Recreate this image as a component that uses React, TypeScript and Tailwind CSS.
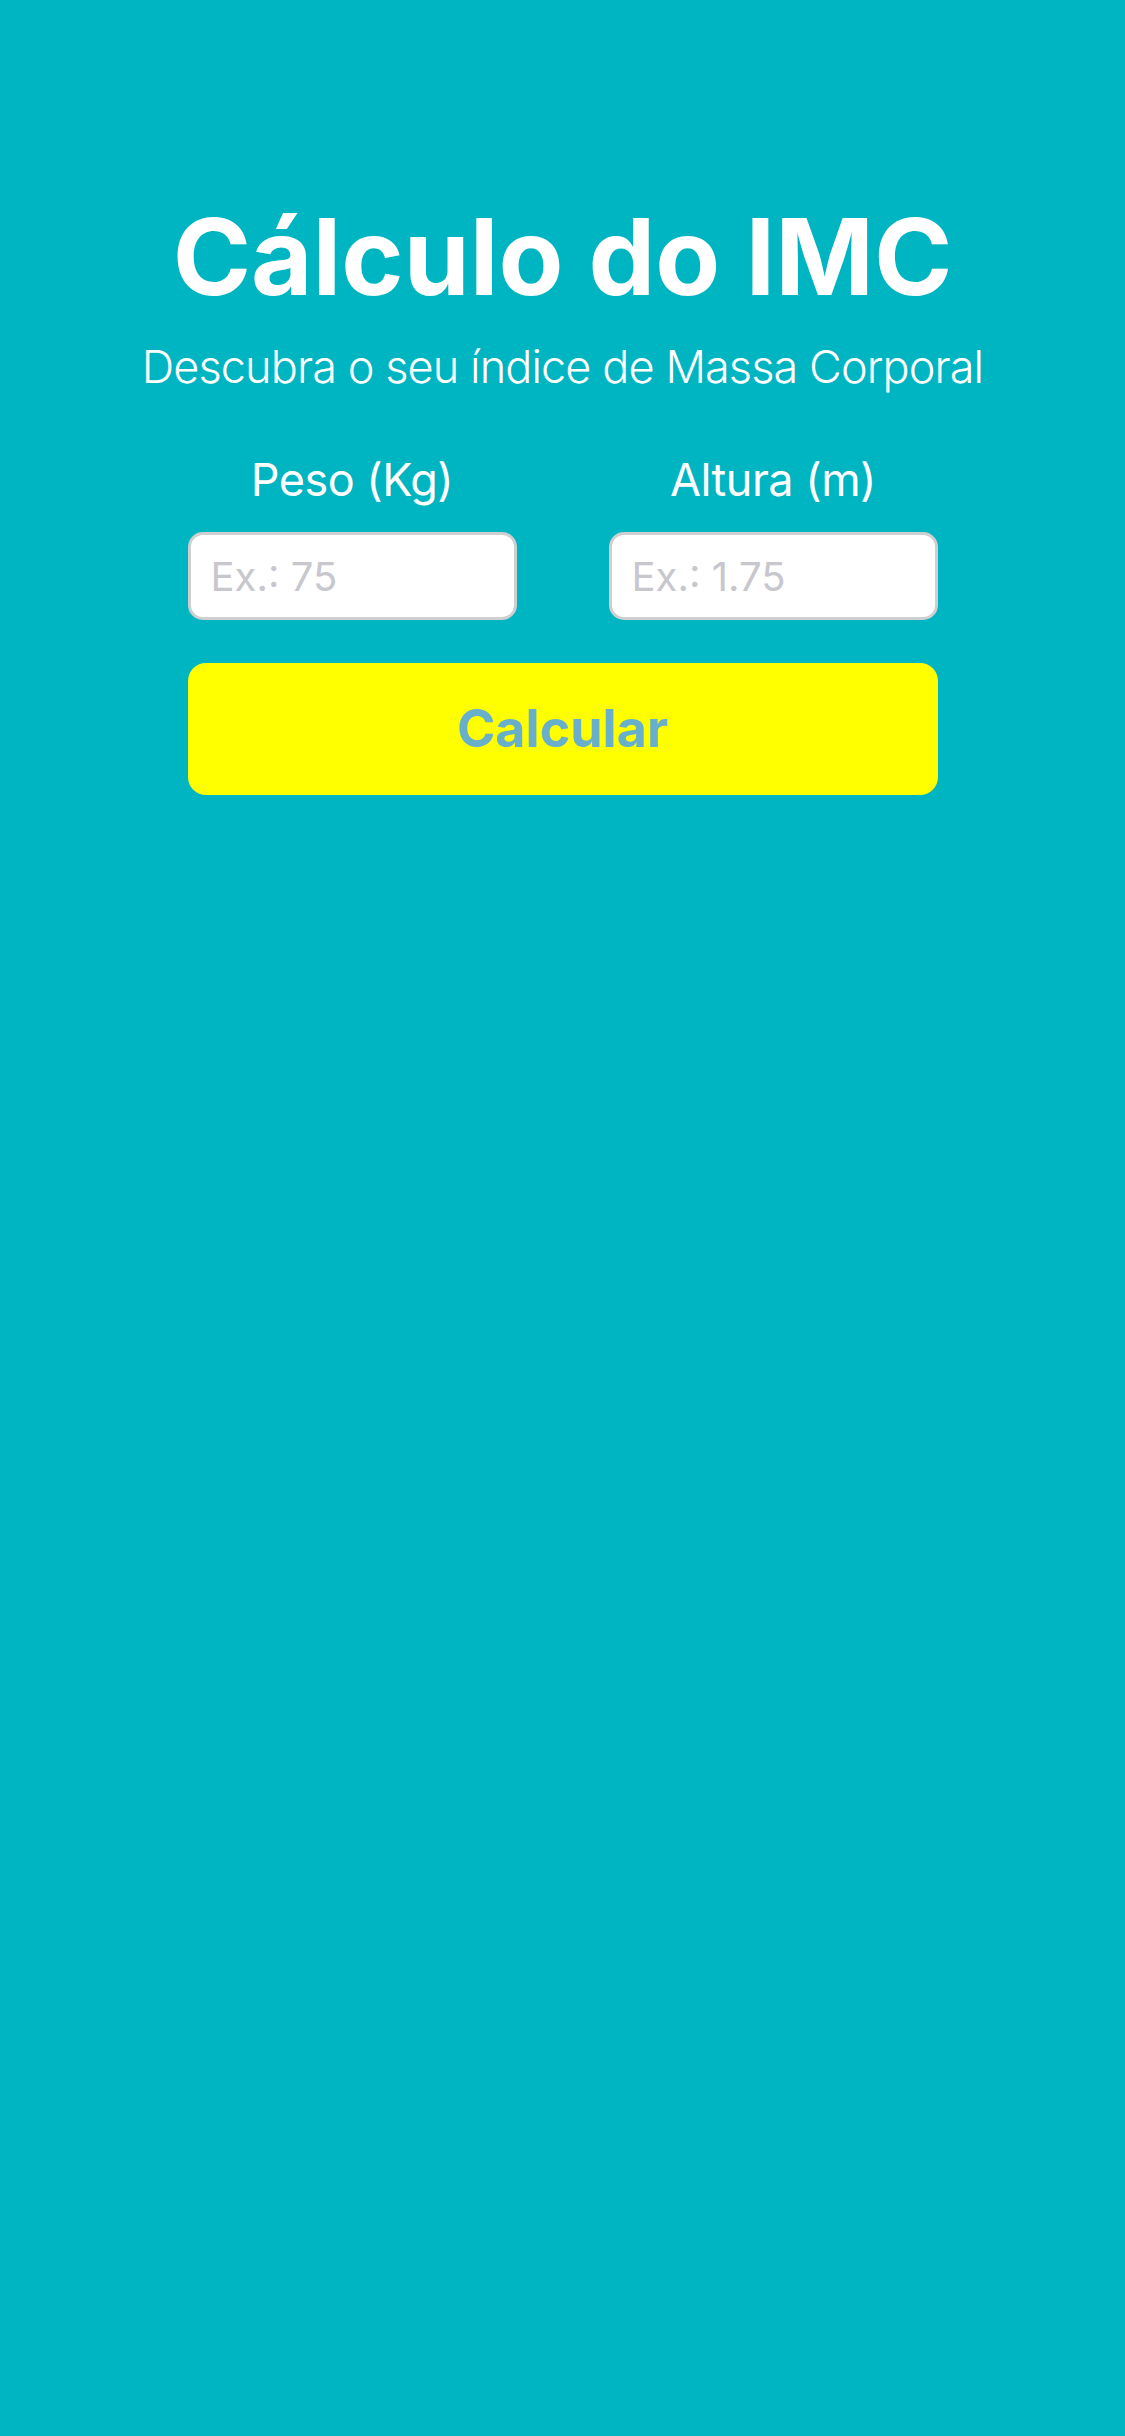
import React from "react";

export default function App() {
  return (
    <div
      className="w-[1125px] h-[2436px] bg-[#00b5c2] flex flex-col items-center"
      style={{ fontFamily: "Inter, 'Noto Sans', sans-serif" }}
    >
      <h1 className="mt-[204px] text-[106px] leading-none font-bold text-white tracking-[0px]">
        Cálculo do IMC
      </h1>
      <p className="mt-[34px] text-[45px] leading-none font-light text-white tracking-[-0.9px]">
        Descubra o seu índice de Massa Corporal
      </p>
      <div className="mt-[68px] w-[750px] flex flex-col">
        <div className="grid grid-cols-2 gap-[92px]">
          <div className="flex flex-col items-center">
            <label className="text-[45px] leading-none text-white tracking-[-0.5px]">Peso (Kg)</label>
            <input
              className="mt-[30px] w-full h-[88px] rounded-[15px] border-[3px] border-[#cfcfcf] bg-white px-[20px] text-[40px] text-[#333] placeholder:text-[#c7c7cd] outline-none"
              placeholder="Ex.: 75"
            />
          </div>
          <div className="flex flex-col items-center">
            <label className="text-[45px] leading-none text-white tracking-[-0.5px]">Altura (m)</label>
            <input
              className="mt-[30px] w-full h-[88px] rounded-[15px] border-[3px] border-[#cfcfcf] bg-white px-[20px] text-[40px] text-[#333] placeholder:text-[#c7c7cd] outline-none"
              placeholder="Ex.: 1.75"
            />
          </div>
        </div>
        <button className="mt-[43px] h-[132px] w-full rounded-[18px] bg-[#ffff00] flex items-center justify-center text-[52px] font-bold text-[#67afcb]">
          Calcular
        </button>
      </div>
    </div>
  );
}
